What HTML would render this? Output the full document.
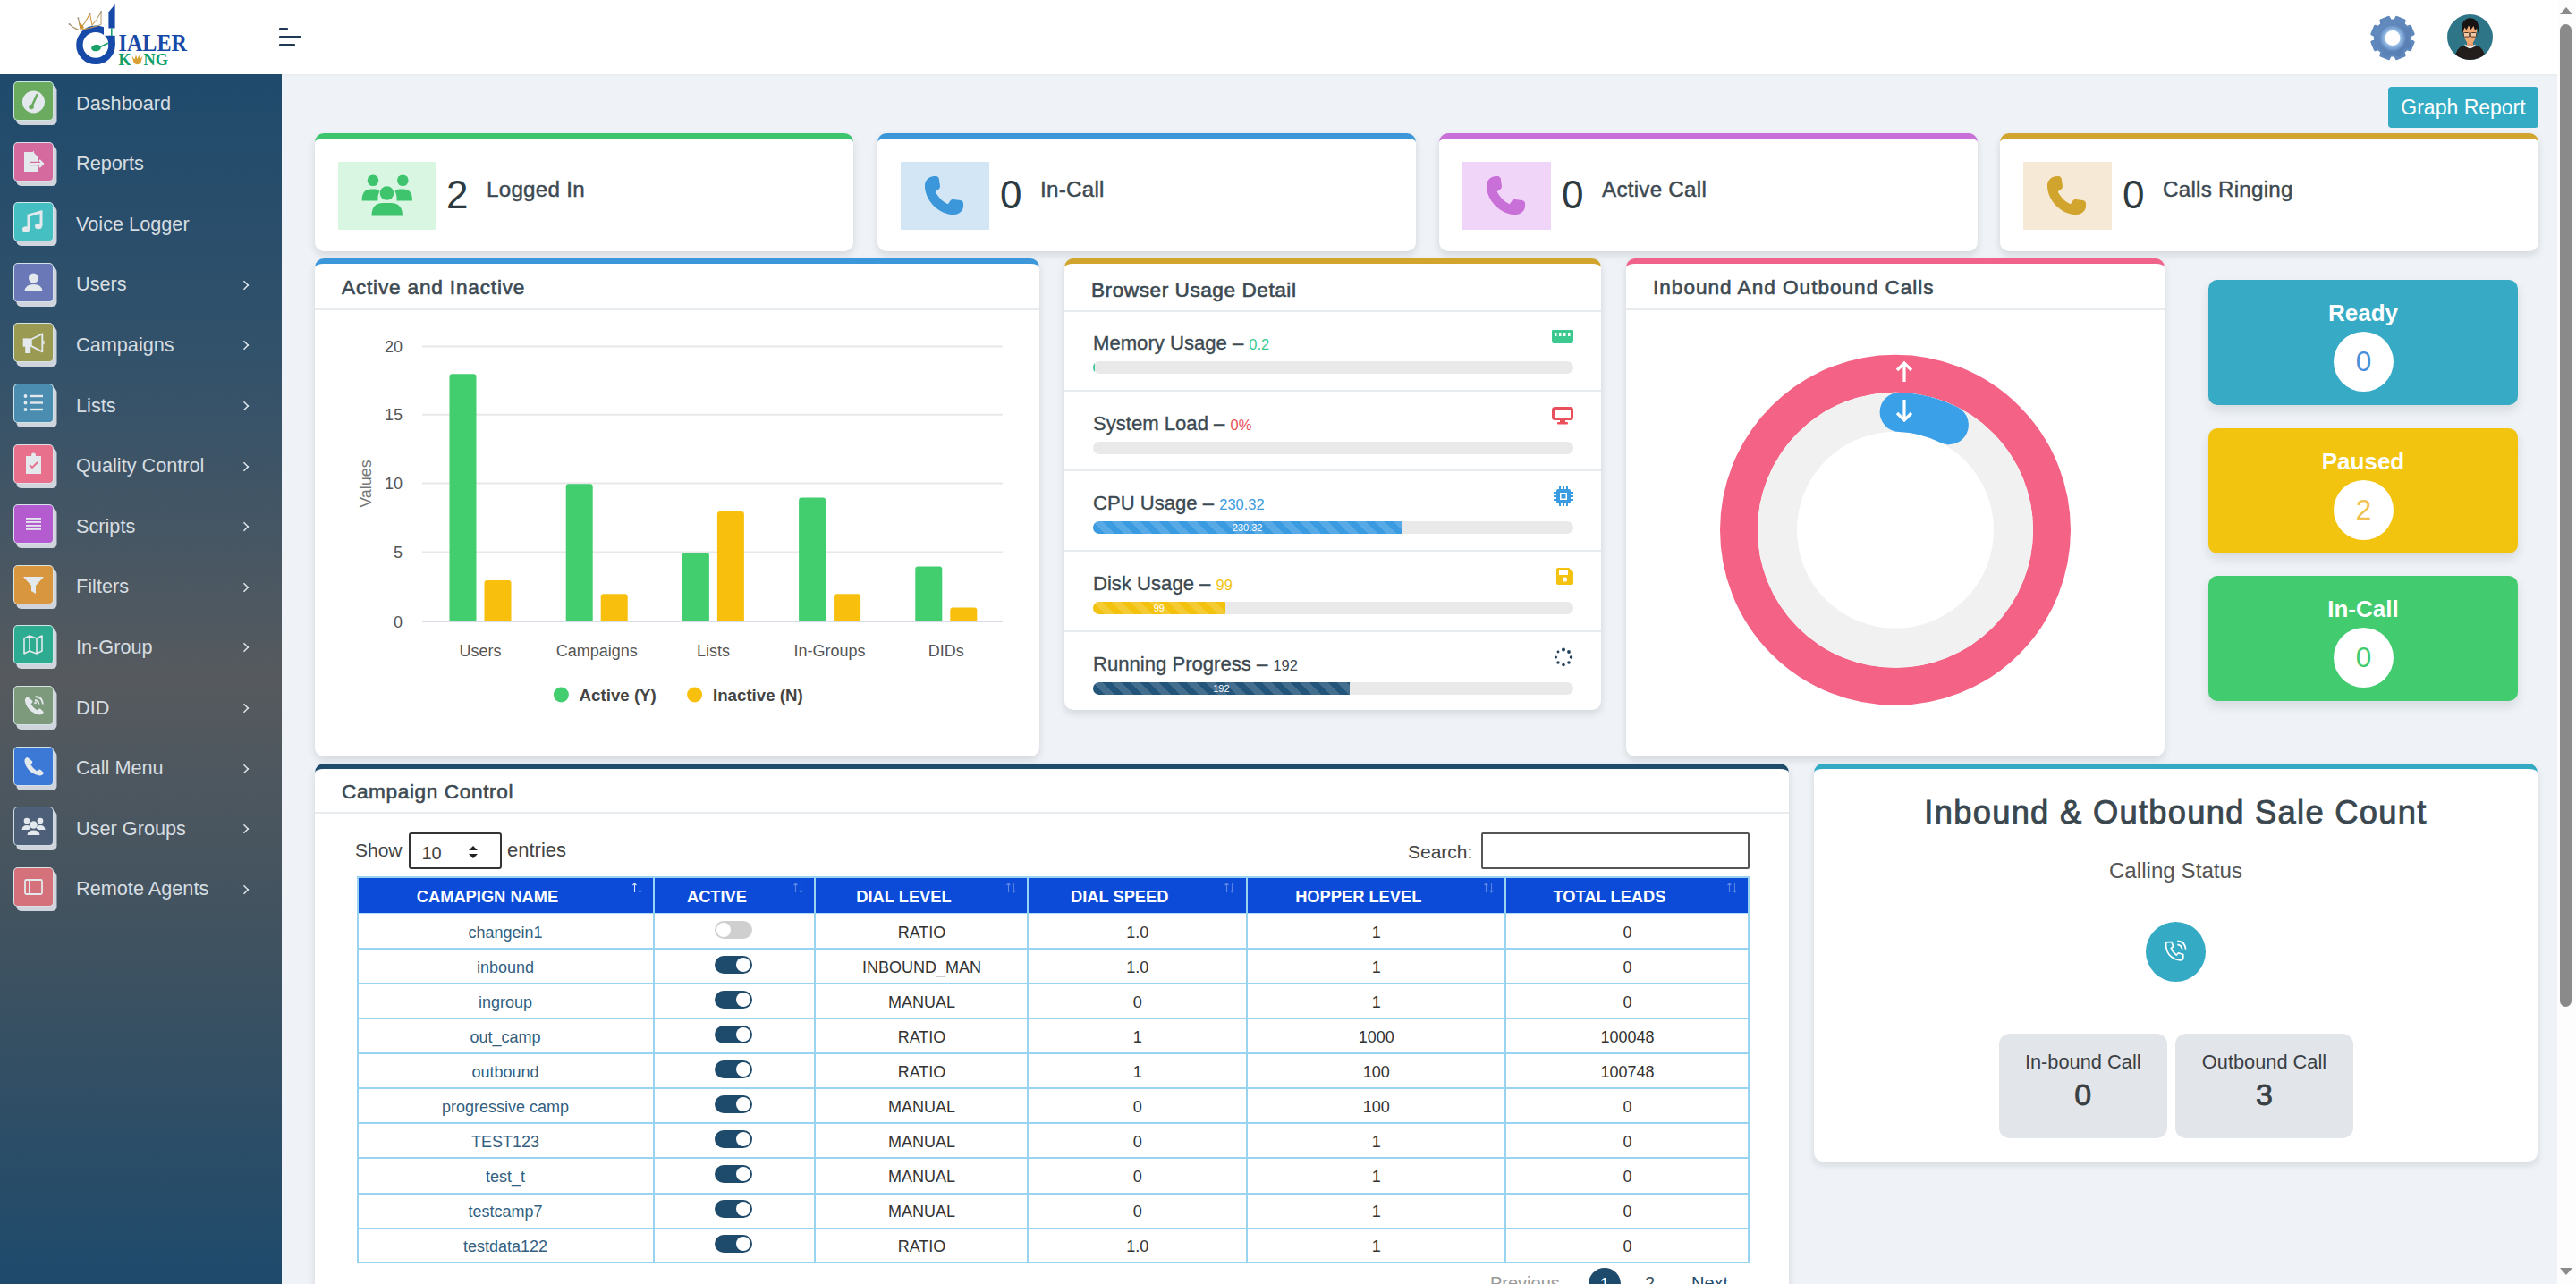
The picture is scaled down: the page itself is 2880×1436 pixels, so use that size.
<!DOCTYPE html><html><head><meta charset="utf-8"><title>Dashboard</title><style>
*{box-sizing:border-box;margin:0;padding:0}
html,body{width:2880px;height:1436px;overflow:hidden}
body{background:#eff3f7;font-family:"Liberation Sans",sans-serif;position:relative;color:#333}
.abs{position:absolute}
#hdr{left:0;top:0;width:2859px;height:83px;background:#fff;box-shadow:0 1px 3px rgba(0,0,0,.04)}
#sb{left:0;top:83px;width:315px;height:1353px;background:linear-gradient(to bottom,#1f4a6c 0%,#34526a 25%,#565a5e 50%,#3f5260 72%,#1e4a6c 100%)}
#scroll{left:2859px;top:0;width:21px;height:1436px;background:#fdfdfd}
.mi{position:absolute;left:0;width:315px;height:60px}
.mi .ib{position:absolute;left:15px;top:0;width:45px;height:44px;border-radius:5px;border:1.5px solid rgba(222,236,240,.9);box-shadow:3.5px 5px 0 #d0d4dc}
.mi .tx{position:absolute;left:85px;top:12.5px;font-size:21.7px;color:#d6dde1;white-space:nowrap;line-height:24px}
.mi .chev{position:absolute;left:268px;top:20px;width:10px;height:10px;border-right:2px solid #dfe6ea;border-top:2px solid #dfe6ea;transform:rotate(45deg) scale(.75)}
.card{position:absolute;background:#fff;border-radius:10px;border-top:6px solid #3ec46d;box-shadow:0 4px 9px rgba(20,20,30,.12)}
.stat .icb{position:absolute;top:26px;height:76px}
.stat .num{position:absolute;top:32.5px;font-size:44px;color:#2d3a3f;line-height:60px}
.stat .lbl{position:absolute;top:42px;font-size:24.2px;color:#3d4a52;-webkit-text-stroke:0.45px #3d4a52;letter-spacing:0.25px;line-height:30px;white-space:nowrap}
.ch{position:absolute;left:0;right:0;top:0;height:52px;border-bottom:2px solid #e9ecef}
.ch span{position:absolute;left:30px;top:14px;font-size:22.6px;color:#3d4a52;-webkit-text-stroke:0.6px #3d4a52;letter-spacing:0.62px;white-space:nowrap;line-height:26px}
</style></head><body>
<div id="hdr" class="abs">
<svg class="abs" style="left:70px;top:0px" width="150" height="80" viewBox="70 0 150 80">
<defs><linearGradient id="crg" x1="0" y1="0" x2="1" y2="0"><stop offset="0" stop-color="#9a8a70"/><stop offset="0.5" stop-color="#d49a3c"/><stop offset="1" stop-color="#b8a27a"/></linearGradient></defs>
<circle cx="107" cy="50.3" r="18.1" fill="none" stroke="#1649a8" stroke-width="7.4"/>
<rect x="116" y="20" width="20" height="19.8" fill="#fff"/>
<rect x="121.4" y="39.8" width="7.3" height="12" fill="#1649a8"/>
<path d="M121.4 13.4 L128.6 4.7 L128.6 31.5 L121.4 31.5 Z" fill="#1649a8"/>
<rect x="124" y="31.5" width="1.6" height="8.5" fill="#19a068"/>
<ellipse cx="107.5" cy="53.6" rx="5.4" ry="3.7" fill="#19a068" transform="rotate(-8 107.5 53.6)"/>
<path d="M111.5 52.8 L120.3 48.4" stroke="#19a068" stroke-width="1.7" stroke-linecap="round"/>
<path d="M77.5 26.8 Q82 31.5 88.5 33.5 Q100 32 113 27.5" fill="none" stroke="url(#crg)" stroke-width="1.1"/>
<path d="M87.4 20.2 L90 32 L95 25 L100.5 15.6 L103 28 L108 22 L113 13.4 L113 27.5" fill="none" stroke="url(#crg)" stroke-width="1.1"/>
<path d="M88 25 Q92 27 94 31 L90 33 Z" fill="#d4902c"/>
<circle cx="77.5" cy="26.8" r="0.9" fill="#9a8a70"/><circle cx="87.4" cy="20.2" r="0.9" fill="#9a8a70"/><circle cx="100.5" cy="15.6" r="0.9" fill="#9a8a70"/><circle cx="113" cy="13.4" r="0.9" fill="#9a8a70"/>
<text x="132.6" y="57.3" font-family="Liberation Serif" font-weight="bold" font-size="26.7" fill="#1649a8" textLength="76.3" lengthAdjust="spacingAndGlyphs">IALER</text>
<text x="132.6" y="72.9" font-family="Liberation Serif" font-weight="bold" font-size="18.9" fill="#13a06a" textLength="14" lengthAdjust="spacingAndGlyphs">K</text>
<path d="M147.5 62.5 L150.5 66.5 L152 61.5 L153.5 66 L155.5 61.5 L156.5 66.5 L159.5 62.5 L157.5 70 Q153.5 74.5 149.5 70 Z" fill="#d9a033"/>
<text x="160.5" y="72.9" font-family="Liberation Serif" font-weight="bold" font-size="18.9" fill="#13a06a" textLength="27.5" lengthAdjust="spacingAndGlyphs">NG</text>
</svg>
<div class="abs" style="left:312px;top:31px;width:10px;height:3px;background:#1d3a52;border-radius:1px"></div>
<div class="abs" style="left:312px;top:40px;width:25px;height:3px;background:#1d3a52;border-radius:1px"></div>
<div class="abs" style="left:312px;top:49px;width:18px;height:3px;background:#1d3a52;border-radius:1px"></div>
<svg class="abs" style="left:2645px;top:12px" width="62" height="62" viewBox="2645 12 62 62">
<defs><linearGradient id="gg" x1="0" y1="0" x2="1" y2="1"><stop offset="0" stop-color="#6890c4"/><stop offset="1" stop-color="#5479ae"/></linearGradient>
<radialGradient id="gr"><stop offset="0.55" stop-color="#9fc5ec"/><stop offset="1" stop-color="#5d85bb"/></radialGradient></defs>
<path d="M2677.6 22.9 L2679.5 19.3 L2688.2 22.9 L2687.1 26.8 L2690.7 30.4 L2694.6 29.3 L2698.2 38.0 L2694.6 39.9 L2694.6 45.1 L2698.2 47.0 L2694.6 55.7 L2690.7 54.6 L2687.1 58.2 L2688.2 62.1 L2679.5 65.7 L2677.6 62.1 L2672.4 62.1 L2670.5 65.7 L2661.8 62.1 L2662.9 58.2 L2659.3 54.6 L2655.4 55.7 L2651.8 47.0 L2655.4 45.1 L2655.4 39.9 L2651.8 38.0 L2655.4 29.3 L2659.3 30.4 L2662.9 26.8 L2661.8 22.9 L2670.5 19.3 L2672.4 22.9Z" fill="url(#gg)" stroke="#5f88bc" stroke-width="3" stroke-linejoin="round"/>
<circle cx="2675" cy="42.5" r="15" fill="url(#gr)"/>
<circle cx="2675" cy="42.5" r="8.5" fill="#fff"/>
</svg>
<svg class="abs" style="left:2736px;top:16px" width="51" height="51" viewBox="0 0 51 51">
<defs><clipPath id="ac"><circle cx="25.5" cy="25.5" r="25.5"/></clipPath></defs>
<g clip-path="url(#ac)">
<rect width="51" height="51" fill="#2e7588"/>
<path d="M8 52 Q9 38 17.5 35 L33.5 35 Q42 38 43 52Z" fill="#231e1c"/>
<rect x="22" y="27" width="7" height="8" fill="#e29a6a"/>
<path d="M19.5 33.5 L25.5 36.5 L31.5 33.5 L31 36 L25.5 38.5 L20 36Z" fill="#f2f2f2"/>
<path d="M17.8 12 Q17.5 31 25.5 33.5 Q33.5 31 33.2 12 Z" fill="#efa974"/>
<path d="M16.5 22 Q14.5 9 21 5.5 Q25.5 3 30.5 5.5 Q37 9 34.5 22 L33.5 15.5 L31 18 L29.5 13 L26.5 17 L24 12.5 L21.5 17.5 L19.5 14.5 L18 19Z" fill="#171313"/>
<rect x="18.3" y="20.5" width="6.4" height="4.6" rx="1.2" fill="rgba(255,255,255,.35)" stroke="#3b2a22" stroke-width="0.9"/>
<rect x="26.3" y="20.5" width="6.4" height="4.6" rx="1.2" fill="rgba(255,255,255,.35)" stroke="#3b2a22" stroke-width="0.9"/>
</g></svg>
</div>
<div id="sb" class="abs"></div>
<div class="mi" style="top:91.0px"><div class="ib" style="background:#6aab5f"><svg width="45" height="44" viewBox="0 0 45 44" style="position:absolute;left:-1px;top:-1px"><circle cx="22.5" cy="23" r="12.5" fill="#e3e9ec"/><path d="M20 29 L26.5 15" stroke="#6aab5f" stroke-width="2.6" stroke-linecap="round"/><circle cx="20" cy="28.5" r="2.8" fill="#6aab5f"/></svg></div><div class="tx">Dashboard</div></div>
<div class="mi" style="top:158.6px"><div class="ib" style="background:#d56a9e"><svg width="45" height="44" viewBox="0 0 45 44" style="position:absolute;left:-1px;top:-1px"><path d="M12 11 L22 11 L27 16 L27 33 L12 33 Z" fill="#e3e9ec"/><path d="M22.5 10 L22.5 15.5 L28 15.5" fill="none" stroke="#e3e9ec" stroke-width="1.2"/><path d="M20 24 L33 24 M29 20 L33 24 L29 28" stroke="#e3e9ec" stroke-width="2" fill="none"/><path d="M19 21.8 L27 21.8 L27 26.2 L19 26.2Z" fill="#d56a9e"/><path d="M19 24 L33 24 M29.5 20.5 L33 24 L29.5 27.5" stroke="#e3e9ec" stroke-width="1.8" fill="none"/></svg></div><div class="tx">Reports</div></div>
<div class="mi" style="top:226.2px"><div class="ib" style="background:#46bfc3"><svg width="45" height="44" viewBox="0 0 45 44" style="position:absolute;left:-1px;top:-1px"><path d="M17 30 L17 15 L31 11 L31 27" fill="none" stroke="#e3e9ec" stroke-width="3"/><ellipse cx="14" cy="30.5" rx="4" ry="3.2" fill="#e3e9ec"/><ellipse cx="28" cy="27" rx="4" ry="3.2" fill="#e3e9ec"/></svg></div><div class="tx">Voice Logger</div></div>
<div class="mi" style="top:293.8px"><div class="ib" style="background:#6a78b8"><svg width="45" height="44" viewBox="0 0 45 44" style="position:absolute;left:-1px;top:-1px"><circle cx="22.5" cy="17" r="5.5" fill="#e3e9ec"/><path d="M12.5 32 Q13 24 22.5 24 Q32 24 32.5 32 Z" fill="#e3e9ec"/></svg></div><div class="tx">Users</div><div class="chev"></div></div>
<div class="mi" style="top:361.4px"><div class="ib" style="background:#9a9a52"><svg width="45" height="44" viewBox="0 0 45 44" style="position:absolute;left:-1px;top:-1px"><rect x="10.7" y="17.4" width="8.6" height="9.3" fill="#e3e9ec"/><rect x="13.2" y="26" width="6" height="8" fill="#e3e9ec"/><path d="M19.8 18.5 L32.3 12.3 L32.3 32.3 L19.8 25.8 Z" fill="none" stroke="#e3e9ec" stroke-width="1.9" stroke-linejoin="round"/><path d="M33.5 20 Q35 22 33.5 24" fill="none" stroke="#e3e9ec" stroke-width="1.5"/></svg></div><div class="tx">Campaigns</div><div class="chev"></div></div>
<div class="mi" style="top:429.0px"><div class="ib" style="background:#4a8db0"><svg width="45" height="44" viewBox="0 0 45 44" style="position:absolute;left:-1px;top:-1px"><circle cx="13.5" cy="14" r="1.9" fill="#e3e9ec"/><circle cx="13.5" cy="21.5" r="1.9" fill="#e3e9ec"/><circle cx="13.5" cy="29" r="1.9" fill="#e3e9ec"/><rect x="18" y="12.8" width="15" height="2.4" fill="#e3e9ec"/><rect x="18" y="20.3" width="15" height="2.4" fill="#e3e9ec"/><rect x="18" y="27.8" width="15" height="2.4" fill="#e3e9ec"/></svg></div><div class="tx">Lists</div><div class="chev"></div></div>
<div class="mi" style="top:496.6px"><div class="ib" style="background:#e8708d"><svg width="45" height="44" viewBox="0 0 45 44" style="position:absolute;left:-1px;top:-1px"><path d="M14 13 L31 13 L31 33 L14 33 Z" fill="#e3e9ec"/><circle cx="22.5" cy="12" r="2.5" fill="#e3e9ec"/><path d="M18 23 L21 26 L27 20" stroke="#e8708d" stroke-width="1.8" fill="none"/></svg></div><div class="tx">Quality Control</div><div class="chev"></div></div>
<div class="mi" style="top:564.2px"><div class="ib" style="background:#b55bd0"><svg width="45" height="44" viewBox="0 0 45 44" style="position:absolute;left:-1px;top:-1px"><rect x="14" y="15" width="17" height="1.8" fill="#e3e9ec"/><rect x="14" y="19" width="17" height="1.8" fill="#e3e9ec"/><rect x="14" y="23" width="17" height="1.8" fill="#e3e9ec"/><rect x="14" y="27" width="17" height="1.8" fill="#e3e9ec"/></svg></div><div class="tx">Scripts</div><div class="chev"></div></div>
<div class="mi" style="top:631.8px"><div class="ib" style="background:#d8963f"><svg width="45" height="44" viewBox="0 0 45 44" style="position:absolute;left:-1px;top:-1px"><path d="M11 13 L34 13 L25 23 L25 32 L20 29 L20 23 Z" fill="#e3e9ec"/></svg></div><div class="tx">Filters</div><div class="chev"></div></div>
<div class="mi" style="top:699.4px"><div class="ib" style="background:#2eac92"><svg width="45" height="44" viewBox="0 0 45 44" style="position:absolute;left:-1px;top:-1px"><path d="M12 15 L18 12 L26 15 L32 12 L32 29 L26 32 L18 29 L12 32 Z M18 12 L18 29 M26 15 L26 32" fill="none" stroke="#e3e9ec" stroke-width="1.6" stroke-linejoin="round"/></svg></div><div class="tx">In-Group</div><div class="chev"></div></div>
<div class="mi" style="top:767.0px"><div class="ib" style="background:#7e9a7c"><svg width="45" height="44" viewBox="0 0 45 44" style="position:absolute;left:-1px;top:-1px"><g transform="translate(10.5 10) scale(0.7)"><path d="M8 3.5 Q6.5 3.5 5 5 Q3 7 3.5 10 Q5 19 13 26 Q20 31.5 27 32 Q30 32.2 32 30 Q33.5 28.5 33 27 L28 22.5 Q26.8 21.6 25.5 22.5 L22.5 24.8 Q17 21.5 13 15 L15.3 12 Q16.2 10.8 15.3 9.5 Z" fill="#e3e9ec"/></g><path d="M24 16 Q28 16.5 28.5 20.5 M24.5 12 Q32.5 12.5 33 20.5" stroke="#e3e9ec" stroke-width="1.8" fill="none"/><circle cx="24.5" cy="19" r="1.3" fill="#e3e9ec"/></svg></div><div class="tx">DID</div><div class="chev"></div></div>
<div class="mi" style="top:834.6px"><div class="ib" style="background:#3c79d6"><svg width="45" height="44" viewBox="0 0 45 44" style="position:absolute;left:-1px;top:-1px"><g transform="translate(10 9.5) scale(0.72)"><path d="M8 3.5 Q6.5 3.5 5 5 Q3 7 3.5 10 Q5 19 13 26 Q20 31.5 27 32 Q30 32.2 32 30 Q33.5 28.5 33 27 L28 22.5 Q26.8 21.6 25.5 22.5 L22.5 24.8 Q17 21.5 13 15 L15.3 12 Q16.2 10.8 15.3 9.5 Z" fill="#e3e9ec"/></g></svg></div><div class="tx">Call Menu</div><div class="chev"></div></div>
<div class="mi" style="top:902.2px"><div class="ib" style="background:#4e5f79"><svg width="45" height="44" viewBox="0 0 45 44" style="position:absolute;left:-1px;top:-1px"><circle cx="15" cy="16" r="3.3" fill="#e3e9ec"/><circle cx="30" cy="16" r="3.3" fill="#e3e9ec"/><path d="M9.5 26 Q10 21 15 21 Q19 21 19.5 24 L17 26Z M35.5 26 Q35 21 30 21 Q26 21 25.5 24 L28 26Z" fill="#e3e9ec"/><circle cx="22.5" cy="20.5" r="4.2" fill="#e3e9ec"/><path d="M15.5 32 Q16 26.5 22.5 26.5 Q29 26.5 29.5 32 Z" fill="#e3e9ec"/></svg></div><div class="tx">User Groups</div><div class="chev"></div></div>
<div class="mi" style="top:969.8px"><div class="ib" style="background:#d4717b"><svg width="45" height="44" viewBox="0 0 45 44" style="position:absolute;left:-1px;top:-1px"><rect x="13" y="14" width="19" height="16" rx="1.5" fill="none" stroke="#e3e9ec" stroke-width="1.8"/><rect x="17" y="14" width="1.8" height="16" fill="#e3e9ec"/></svg></div><div class="tx">Remote Agents</div><div class="chev"></div></div>
<div id="scroll" class="abs"></div>
<div class="abs" style="left:2862px;top:8px;width:0;height:0;border-left:7px solid transparent;border-right:7px solid transparent;border-bottom:8px solid #8a8a8a"></div>
<div class="abs" style="left:2862px;top:27px;width:13px;height:1099px;background:#8a8a8a;border-radius:7px"></div>
<div class="abs" style="left:2862px;top:1418px;width:0;height:0;border-left:7px solid transparent;border-right:7px solid transparent;border-top:8px solid #8a8a8a"></div>
<div class="abs" style="left:2670px;top:97px;width:168px;height:46px;background:#33abc4;border-radius:4px;color:#fff;font-size:23px;line-height:46px;text-align:center">Graph Report</div>
<div class="card stat" style="left:352px;top:149px;width:602px;height:132px;border-top-color:#3ec46d">
<div class="icb" style="left:26px;width:109px;background:#d8f6e2"></div>
<svg class="abs" style="left:52px;top:40px" width="58" height="48" viewBox="404 195 58 48" fill="#3ec46d"><circle cx="417" cy="201.8" r="6.3"/><circle cx="450.3" cy="201.8" r="6.3"/><path d="M404.5 224.5 Q404.5 211.5 415 211.5 L420 211.5 Q423 211.5 424.5 214 Q422 218 422.5 224.5Z"/><path d="M461 224.5 Q461 211.5 451 211.5 L446 211.5 Q443 211.5 441.5 214 Q444 218 443.5 224.5Z"/><circle cx="432.5" cy="216" r="7.8"/><path d="M415.5 241.5 Q415.5 227 428 227 L437 227 Q450 227 450 241.5Z"/></svg>
<div class="num" style="left:147px">2</div>
<div class="lbl" style="left:192px">Logged In</div>
</div>
<div class="card stat" style="left:981px;top:149px;width:602px;height:132px;border-top-color:#3b96da">
<div class="icb" style="left:26px;width:99px;background:#d2e6f5"></div>
<svg class="abs" style="left:51px;top:40px" width="47" height="47" viewBox="0 0 36 36" fill="#3b96da"><path d="M9.5 1.5 C6 1.5 1.5 4.5 1.5 9.5 C1.5 22.5 13.5 34.5 26.5 34.5 C31 34.5 34.5 31 34.5 27 L34.5 25 C34.5 23.5 33.5 22.5 32 22.3 L26 21.5 C24.8 21.3 23.8 21.8 23.2 22.8 L21.3 25.5 C16.5 23.3 12.8 19.5 10.5 14.8 L13.2 12.8 C14.2 12.2 14.7 11.2 14.5 10 L13.7 4 C13.5 2.5 12.5 1.5 11 1.5 Z"/></svg>
<div class="num" style="left:137px">0</div>
<div class="lbl" style="left:182px">In-Call</div>
</div>
<div class="card stat" style="left:1609px;top:149px;width:602px;height:132px;border-top-color:#c86fd8">
<div class="icb" style="left:26px;width:99px;background:#f1d5f8"></div>
<svg class="abs" style="left:51px;top:40px" width="47" height="47" viewBox="0 0 36 36" fill="#c86fd8"><path d="M9.5 1.5 C6 1.5 1.5 4.5 1.5 9.5 C1.5 22.5 13.5 34.5 26.5 34.5 C31 34.5 34.5 31 34.5 27 L34.5 25 C34.5 23.5 33.5 22.5 32 22.3 L26 21.5 C24.8 21.3 23.8 21.8 23.2 22.8 L21.3 25.5 C16.5 23.3 12.8 19.5 10.5 14.8 L13.2 12.8 C14.2 12.2 14.7 11.2 14.5 10 L13.7 4 C13.5 2.5 12.5 1.5 11 1.5 Z"/></svg>
<div class="num" style="left:137px">0</div>
<div class="lbl" style="left:182px">Active Call</div>
</div>
<div class="card stat" style="left:2236px;top:149px;width:602px;height:132px;border-top-color:#d1a42e">
<div class="icb" style="left:26px;width:99px;background:#f6ead7"></div>
<svg class="abs" style="left:51px;top:40px" width="47" height="47" viewBox="0 0 36 36" fill="#d1a42e"><path d="M9.5 1.5 C6 1.5 1.5 4.5 1.5 9.5 C1.5 22.5 13.5 34.5 26.5 34.5 C31 34.5 34.5 31 34.5 27 L34.5 25 C34.5 23.5 33.5 22.5 32 22.3 L26 21.5 C24.8 21.3 23.8 21.8 23.2 22.8 L21.3 25.5 C16.5 23.3 12.8 19.5 10.5 14.8 L13.2 12.8 C14.2 12.2 14.7 11.2 14.5 10 L13.7 4 C13.5 2.5 12.5 1.5 11 1.5 Z"/></svg>
<div class="num" style="left:137px">0</div>
<div class="lbl" style="left:182px">Calls Ringing</div>
</div>
<div class="card" style="left:352px;top:289px;width:810px;height:557px;border-top-color:#3b96da"><div class="ch"><span style="letter-spacing:0.82px">Active and Inactive</span></div></div>
<div class="card" style="left:1190px;top:289px;width:600px;height:505px;border-top-color:#d1a42e"><div class="ch" style="height:54px"><span style="top:17px;letter-spacing:0.55px">Browser Usage Detail</span></div></div>
<div class="card" style="left:1818px;top:289px;width:602px;height:557px;border-top-color:#f0638a"><div class="ch"><span style="letter-spacing:0.99px">Inbound And Outbound Calls</span></div></div>
<div class="abs" style="left:2469px;top:313px;width:346px;height:140px;border-radius:10px;background:#37aac5;box-shadow:0 6px 12px rgba(30,40,60,.12)">
<div class="abs" style="left:0;right:0;top:22px;text-align:center;color:#fff;font-weight:bold;font-size:26px;line-height:30px">Ready</div>
<div class="abs" style="left:140px;top:58px;width:67px;height:67px;border-radius:50%;background:#fff;color:#4a90d9;font-size:31.5px;line-height:67px;text-align:center">0</div>
</div>
<div class="abs" style="left:2469px;top:478.6px;width:346px;height:140px;border-radius:10px;background:#f2c40f;box-shadow:0 6px 12px rgba(30,40,60,.12)">
<div class="abs" style="left:0;right:0;top:22px;text-align:center;color:#fff;font-weight:bold;font-size:26px;line-height:30px">Paused</div>
<div class="abs" style="left:140px;top:58px;width:67px;height:67px;border-radius:50%;background:#fff;color:#f0c050;font-size:31.5px;line-height:67px;text-align:center">2</div>
</div>
<div class="abs" style="left:2469px;top:643.5px;width:346px;height:140px;border-radius:10px;background:#42cb6f;box-shadow:0 6px 12px rgba(30,40,60,.12)">
<div class="abs" style="left:0;right:0;top:22px;text-align:center;color:#fff;font-weight:bold;font-size:26px;line-height:30px">In-Call</div>
<div class="abs" style="left:140px;top:58px;width:67px;height:67px;border-radius:50%;background:#fff;color:#42cb6f;font-size:31.5px;line-height:67px;text-align:center">0</div>
</div>
<div class="card" style="left:352px;top:854px;width:1648px;height:700px;border-top-color:#1e4a6b"><div class="ch" style="height:50px"><span style="top:12.5px;letter-spacing:0.62px">Campaign Control</span></div></div>
<div class="card" style="left:2028px;top:854px;width:809px;height:445px;border-top-color:#33a9c3"></div>
<svg class="abs" style="left:352px;top:295px" width="810" height="551" viewBox="352 295 810 551"><line x1="472" x2="1121" y1="387.5" y2="387.5" stroke="#e8e8e8" stroke-width="2"/><text x="450" y="394.0" text-anchor="end" font-size="18" fill="#555" font-family="Liberation Sans">20</text><line x1="472" x2="1121" y1="463.8" y2="463.8" stroke="#e8e8e8" stroke-width="2"/><text x="450" y="470.3" text-anchor="end" font-size="18" fill="#555" font-family="Liberation Sans">15</text><line x1="472" x2="1121" y1="540.5" y2="540.5" stroke="#e8e8e8" stroke-width="2"/><text x="450" y="547.0" text-anchor="end" font-size="18" fill="#555" font-family="Liberation Sans">10</text><line x1="472" x2="1121" y1="617.5" y2="617.5" stroke="#e8e8e8" stroke-width="2"/><text x="450" y="624.0" text-anchor="end" font-size="18" fill="#555" font-family="Liberation Sans">5</text><line x1="472" x2="1121" y1="695.0" y2="695.0" stroke="#d8dbe8" stroke-width="2"/><text x="450" y="701.5" text-anchor="end" font-size="18" fill="#555" font-family="Liberation Sans">0</text><text x="0" y="0" transform="translate(415 541) rotate(-90)" text-anchor="middle" font-size="18" fill="#777" font-family="Liberation Sans">Values</text><path d="M502.5 695 L502.5 421.2 Q502.5 418.2 505.5 418.2 L529.5 418.2 Q532.5 418.2 532.5 421.2 L532.5 695Z" fill="#42cd6e"/><path d="M541.5 695 L541.5 651.9 Q541.5 648.9 544.5 648.9 L568.5 648.9 Q571.5 648.9 571.5 651.9 L571.5 695Z" fill="#f8c00d"/><text x="537.0" y="734" text-anchor="middle" font-size="18" fill="#555" font-family="Liberation Sans">Users</text><path d="M632.7 695 L632.7 544.2 Q632.7 541.2 635.7 541.2 L659.7 541.2 Q662.7 541.2 662.7 544.2 L662.7 695Z" fill="#42cd6e"/><path d="M671.7 695 L671.7 667.2 Q671.7 664.2 674.7 664.2 L698.7 664.2 Q701.7 664.2 701.7 667.2 L701.7 695Z" fill="#f8c00d"/><text x="667.2" y="734" text-anchor="middle" font-size="18" fill="#555" font-family="Liberation Sans">Campaigns</text><path d="M762.9 695 L762.9 621.1 Q762.9 618.1 765.9 618.1 L789.9 618.1 Q792.9 618.1 792.9 621.1 L792.9 695Z" fill="#42cd6e"/><path d="M801.9 695 L801.9 575.0 Q801.9 572.0 804.9 572.0 L828.9 572.0 Q831.9 572.0 831.9 575.0 L831.9 695Z" fill="#f8c00d"/><text x="797.4" y="734" text-anchor="middle" font-size="18" fill="#555" font-family="Liberation Sans">Lists</text><path d="M893.1 695 L893.1 559.6 Q893.1 556.6 896.1 556.6 L920.1 556.6 Q923.1 556.6 923.1 559.6 L923.1 695Z" fill="#42cd6e"/><path d="M932.1 695 L932.1 667.2 Q932.1 664.2 935.1 664.2 L959.1 664.2 Q962.1 664.2 962.1 667.2 L962.1 695Z" fill="#f8c00d"/><text x="927.6" y="734" text-anchor="middle" font-size="18" fill="#555" font-family="Liberation Sans">In-Groups</text><path d="M1023.3 695 L1023.3 636.5 Q1023.3 633.5 1026.3 633.5 L1050.3 633.5 Q1053.3 633.5 1053.3 636.5 L1053.3 695Z" fill="#42cd6e"/><path d="M1062.3 695 L1062.3 682.6 Q1062.3 679.6 1065.3 679.6 L1089.3 679.6 Q1092.3 679.6 1092.3 682.6 L1092.3 695Z" fill="#f8c00d"/><text x="1057.8" y="734" text-anchor="middle" font-size="18" fill="#555" font-family="Liberation Sans">DIDs</text><circle cx="627.4" cy="777" r="8.5" fill="#42cd6e"/><text x="647.6" y="783.5" font-size="18.7" font-weight="bold" fill="#444" font-family="Liberation Sans">Active (Y)</text><circle cx="776.6" cy="777" r="8.5" fill="#f8c00d"/><text x="797" y="783.5" font-size="18.7" font-weight="bold" fill="#444" font-family="Liberation Sans">Inactive (N)</text></svg>
<div class="abs" style="left:1222px;top:371px;white-space:nowrap;line-height:26px"><span style="font-size:22.1px;color:#3d4a52;-webkit-text-stroke:0.35px #3d4a52">Memory Usage &ndash; </span><span style="font-size:16.5px;color:#3cc98f">0.2</span></div>
<div class="abs" style="left:1222px;top:404px;width:537px;height:14px;border-radius:7px;background:#e9e9e9;overflow:hidden"><div style="width:2.1px;height:14px;background-color:#3cc98f;background-image:linear-gradient(45deg,rgba(255,255,255,.15) 25%,transparent 25%,transparent 50%,rgba(255,255,255,.15) 50%,rgba(255,255,255,.15) 75%,transparent 75%,transparent);background-size:21px 21px;color:#fff;font-size:11px;line-height:14px;text-align:center"></div></div>
<div class="abs" style="left:1190px;top:436px;width:600px;height:2px;background:#e9ecef"></div>
<div class="abs" style="left:1222px;top:461px;white-space:nowrap;line-height:26px"><span style="font-size:22.1px;color:#3d4a52;-webkit-text-stroke:0.35px #3d4a52">System Load &ndash; </span><span style="font-size:16.5px;color:#e8505b">0%</span></div>
<div class="abs" style="left:1222px;top:494px;width:537px;height:14px;border-radius:7px;background:#e9e9e9;overflow:hidden"><div style="width:0.0px;height:14px;background-color:#e8505b;background-image:linear-gradient(45deg,rgba(255,255,255,.15) 25%,transparent 25%,transparent 50%,rgba(255,255,255,.15) 50%,rgba(255,255,255,.15) 75%,transparent 75%,transparent);background-size:21px 21px;color:#fff;font-size:11px;line-height:14px;text-align:center"></div></div>
<div class="abs" style="left:1190px;top:525px;width:600px;height:2px;background:#e9ecef"></div>
<div class="abs" style="left:1222px;top:550px;white-space:nowrap;line-height:26px"><span style="font-size:22.1px;color:#3d4a52;-webkit-text-stroke:0.35px #3d4a52">CPU Usage &ndash; </span><span style="font-size:16.5px;color:#3a9be0">230.32</span></div>
<div class="abs" style="left:1222px;top:583px;width:537px;height:14px;border-radius:7px;background:#e9e9e9;overflow:hidden"><div style="width:345.3px;height:14px;background-color:#3a9be0;background-image:linear-gradient(45deg,rgba(255,255,255,.15) 25%,transparent 25%,transparent 50%,rgba(255,255,255,.15) 50%,rgba(255,255,255,.15) 75%,transparent 75%,transparent);background-size:21px 21px;color:#fff;font-size:11px;line-height:14px;text-align:center">230.32</div></div>
<div class="abs" style="left:1190px;top:615px;width:600px;height:2px;background:#e9ecef"></div>
<div class="abs" style="left:1222px;top:640px;white-space:nowrap;line-height:26px"><span style="font-size:22.1px;color:#3d4a52;-webkit-text-stroke:0.35px #3d4a52">Disk Usage &ndash; </span><span style="font-size:16.5px;color:#f0c419">99</span></div>
<div class="abs" style="left:1222px;top:673px;width:537px;height:14px;border-radius:7px;background:#e9e9e9;overflow:hidden"><div style="width:147.7px;height:14px;background-color:#f3c20f;background-image:linear-gradient(45deg,rgba(255,255,255,.15) 25%,transparent 25%,transparent 50%,rgba(255,255,255,.15) 50%,rgba(255,255,255,.15) 75%,transparent 75%,transparent);background-size:21px 21px;color:#fff;font-size:11px;line-height:14px;text-align:center">99</div></div>
<div class="abs" style="left:1190px;top:705px;width:600px;height:2px;background:#e9ecef"></div>
<div class="abs" style="left:1222px;top:730px;white-space:nowrap;line-height:26px"><span style="font-size:22.1px;color:#3d4a52;-webkit-text-stroke:0.35px #3d4a52">Running Progress &ndash; </span><span style="font-size:16.5px;color:#3d4a55">192</span></div>
<div class="abs" style="left:1222px;top:763px;width:537px;height:14px;border-radius:7px;background:#e9e9e9;overflow:hidden"><div style="width:286.8px;height:14px;background-color:#23557a;background-image:linear-gradient(45deg,rgba(255,255,255,.15) 25%,transparent 25%,transparent 50%,rgba(255,255,255,.15) 50%,rgba(255,255,255,.15) 75%,transparent 75%,transparent);background-size:21px 21px;color:#fff;font-size:11px;line-height:14px;text-align:center">192</div></div>
<svg class="abs" style="left:1735px;top:368px" width="24" height="17" viewBox="0 0 24 17"><rect x="0" y="1" width="24" height="13" rx="1" fill="#3cc98f"/><rect x="3" y="4" width="2.5" height="4" fill="#fff"/><rect x="8" y="4" width="2.5" height="4" fill="#fff"/><rect x="13" y="4" width="2.5" height="4" fill="#fff"/><rect x="18" y="4" width="2.5" height="4" fill="#fff"/><rect x="1" y="14" width="22" height="2" fill="#3cc98f"/></svg>
<svg class="abs" style="left:1735px;top:455px" width="24" height="20" viewBox="0 0 24 20"><rect x="1.5" y="1.5" width="21" height="12" rx="2" fill="none" stroke="#e8505b" stroke-width="3"/><rect x="9" y="14" width="6" height="3" fill="#e8505b"/><rect x="6" y="17" width="12" height="2.5" rx="1" fill="#e8505b"/></svg>
<svg class="abs" style="left:1737px;top:544px" width="22" height="22" viewBox="0 0 22 22"><rect x="3" y="3" width="16" height="16" rx="2" fill="#3a9be0"/><rect x="7" y="7" width="8" height="8" fill="#fff"/><rect x="8.5" y="8.5" width="5" height="5" fill="#3a9be0"/><g fill="#3a9be0"><rect x="6" y="0" width="2" height="3"/><rect x="10" y="0" width="2" height="3"/><rect x="14" y="0" width="2" height="3"/><rect x="6" y="19" width="2" height="3"/><rect x="10" y="19" width="2" height="3"/><rect x="14" y="19" width="2" height="3"/><rect x="0" y="6" width="3" height="2"/><rect x="0" y="10" width="3" height="2"/><rect x="0" y="14" width="3" height="2"/><rect x="19" y="6" width="3" height="2"/><rect x="19" y="10" width="3" height="2"/><rect x="19" y="14" width="3" height="2"/></g></svg>
<svg class="abs" style="left:1740px;top:635px" width="19" height="19" viewBox="0 0 19 19"><path d="M0 2 Q0 0 2 0 L14 0 L19 5 L19 17 Q19 19 17 19 L2 19 Q0 19 0 17Z" fill="#f3c20f"/><rect x="3" y="3" width="10" height="5" fill="#fff"/><circle cx="9.5" cy="13" r="2.6" fill="#fff"/></svg>
<svg class="abs" style="left:1737px;top:724px" width="22" height="22" viewBox="0 0 22 22" fill="#23415a"><circle cx="11" cy="2.5" r="2"/><circle cx="17" cy="5" r="1.9"/><circle cx="19.5" cy="11" r="1.8"/><circle cx="17" cy="17" r="1.8"/><circle cx="11" cy="19.5" r="1.8"/><circle cx="5" cy="17" r="1.7"/><circle cx="2.5" cy="11" r="1.6"/><circle cx="5" cy="5" r="1.4"/></svg>
<svg class="abs" style="left:1818px;top:347px" width="602" height="499" viewBox="1818 347 602 499"><circle cx="2119" cy="592.8" r="175" fill="none" stroke="#f46386" stroke-width="42"/><circle cx="2119" cy="592.8" r="132" fill="none" stroke="#f1f1f1" stroke-width="44"/><path d="M2123.6 460.9 A132 132 0 0 1 2178.9 475.2" fill="none" stroke="#3aa0e8" stroke-width="44" stroke-linecap="round"/><path d="M2129 427 L2129 407 M2121 414 L2129 406 L2137 414" stroke="#fff" stroke-width="3.2" fill="none"/><path d="M2129 447 L2129 469 M2121 462 L2129 470 L2137 462" stroke="#fff" stroke-width="3.2" fill="none"/></svg>
<div class="abs" style="left:397px;top:939.5px;font-size:21px;color:#444;line-height:22px">Show</div>
<div class="abs" style="left:456.5px;top:931px;width:104px;height:41px;border:2px solid #333;border-radius:3px;background:#fff"><span class="abs" style="left:13px;top:10px;font-size:20px;color:#444;line-height:22px">10</span><svg class="abs" style="left:64px;top:12px" width="12" height="16" viewBox="0 0 12 16"><path d="M1 6 L6 1 L11 6Z M1 10 L6 15 L11 10Z" fill="#222"/></svg></div>
<div class="abs" style="left:567px;top:939.5px;font-size:22px;color:#444;line-height:22px">entries</div>
<div class="abs" style="left:1574px;top:942px;font-size:21px;color:#444;line-height:22px">Search:</div>
<div class="abs" style="left:1656px;top:931px;width:300px;height:41px;border:2px solid #555;border-radius:2px;background:#fff"></div>
<div class="abs" style="left:398.5px;top:979.5px;width:1557px;height:44px;background:#0c4bd8;border:2px solid #98d4f0;border-bottom:3.5px solid #b0e0f8"></div>
<div class="abs" style="left:398.5px;top:992.5px;width:333.0px;text-align:center;padding-right:40px;color:#fff;font-weight:bold;font-size:18.3px;line-height:20px;white-space:nowrap">CAMAPIGN NAME</div>
<svg class="abs" style="left:704.5px;top:985px" width="16" height="16" viewBox="0 0 16 16"><path d="M4.5 13 L4.5 3 M2.5 5 L4.5 3 L6.5 5" stroke="rgba(255,255,255,.85)" stroke-width="1.1" fill="none"/><path d="M10.5 3 L10.5 13 M8.5 11 L10.5 13 L12.5 11" stroke="rgba(255,255,255,.3)" stroke-width="1.1" fill="none"/></svg>
<div class="abs" style="left:731.5px;top:992.5px;width:180.0px;text-align:center;padding-right:40px;color:#fff;font-weight:bold;font-size:18.3px;line-height:20px;white-space:nowrap">ACTIVE</div>
<svg class="abs" style="left:884.5px;top:985px" width="16" height="16" viewBox="0 0 16 16"><path d="M4.5 13 L4.5 3 M2.5 5 L4.5 3 L6.5 5" stroke="rgba(255,255,255,.35)" stroke-width="1.1" fill="none"/><path d="M10.5 3 L10.5 13 M8.5 11 L10.5 13 L12.5 11" stroke="rgba(255,255,255,.3)" stroke-width="1.1" fill="none"/></svg>
<div class="abs" style="left:911.5px;top:992.5px;width:238.0px;text-align:center;padding-right:40px;color:#fff;font-weight:bold;font-size:18.3px;line-height:20px;white-space:nowrap">DIAL LEVEL</div>
<svg class="abs" style="left:1122.5px;top:985px" width="16" height="16" viewBox="0 0 16 16"><path d="M4.5 13 L4.5 3 M2.5 5 L4.5 3 L6.5 5" stroke="rgba(255,255,255,.35)" stroke-width="1.1" fill="none"/><path d="M10.5 3 L10.5 13 M8.5 11 L10.5 13 L12.5 11" stroke="rgba(255,255,255,.3)" stroke-width="1.1" fill="none"/></svg>
<div class="abs" style="left:1149.5px;top:992.5px;width:244.5px;text-align:center;padding-right:40px;color:#fff;font-weight:bold;font-size:18.3px;line-height:20px;white-space:nowrap">DIAL SPEED</div>
<svg class="abs" style="left:1367.0px;top:985px" width="16" height="16" viewBox="0 0 16 16"><path d="M4.5 13 L4.5 3 M2.5 5 L4.5 3 L6.5 5" stroke="rgba(255,255,255,.35)" stroke-width="1.1" fill="none"/><path d="M10.5 3 L10.5 13 M8.5 11 L10.5 13 L12.5 11" stroke="rgba(255,255,255,.3)" stroke-width="1.1" fill="none"/></svg>
<div class="abs" style="left:1394.0px;top:992.5px;width:289.5px;text-align:center;padding-right:40px;color:#fff;font-weight:bold;font-size:18.3px;line-height:20px;white-space:nowrap">HOPPER LEVEL</div>
<svg class="abs" style="left:1656.5px;top:985px" width="16" height="16" viewBox="0 0 16 16"><path d="M4.5 13 L4.5 3 M2.5 5 L4.5 3 L6.5 5" stroke="rgba(255,255,255,.35)" stroke-width="1.1" fill="none"/><path d="M10.5 3 L10.5 13 M8.5 11 L10.5 13 L12.5 11" stroke="rgba(255,255,255,.3)" stroke-width="1.1" fill="none"/></svg>
<div class="abs" style="left:1683.5px;top:992.5px;width:272.0px;text-align:center;padding-right:40px;color:#fff;font-weight:bold;font-size:18.3px;line-height:20px;white-space:nowrap">TOTAL LEADS</div>
<svg class="abs" style="left:1928.5px;top:985px" width="16" height="16" viewBox="0 0 16 16"><path d="M4.5 13 L4.5 3 M2.5 5 L4.5 3 L6.5 5" stroke="rgba(255,255,255,.35)" stroke-width="1.1" fill="none"/><path d="M10.5 3 L10.5 13 M8.5 11 L10.5 13 L12.5 11" stroke="rgba(255,255,255,.3)" stroke-width="1.1" fill="none"/></svg>
<div class="abs" style="left:398.5px;top:1021.5px;width:1557px;height:391px;border:2px solid #98d4f0;border-top:none;background:#fff"></div>
<div class="abs" style="left:398.5px;top:1032.5px;width:333.0px;text-align:center;color:#33607f;font-size:18px;line-height:20px;white-space:nowrap">changein1</div>
<div class="abs" style="left:799px;top:1029.5px;width:42px;height:20px;border-radius:10px;background:#cfcfcf"><div class="abs" style="left:2px;top:2px;width:16px;height:16px;border-radius:50%;background:#fff"></div></div>
<div class="abs" style="left:911.5px;top:1032.5px;width:238.0px;text-align:center;color:#333;font-size:18px;line-height:20px;white-space:nowrap">RATIO</div>
<div class="abs" style="left:1149.5px;top:1032.5px;width:244.5px;text-align:center;color:#333;font-size:18px;line-height:20px;white-space:nowrap">1.0</div>
<div class="abs" style="left:1394.0px;top:1032.5px;width:289.5px;text-align:center;color:#333;font-size:18px;line-height:20px;white-space:nowrap">1</div>
<div class="abs" style="left:1683.5px;top:1032.5px;width:272.0px;text-align:center;color:#333;font-size:18px;line-height:20px;white-space:nowrap">0</div>
<div class="abs" style="left:398.5px;top:1059.8px;width:1557px;height:2px;background:#98d4f0"></div>
<div class="abs" style="left:398.5px;top:1071.6px;width:333.0px;text-align:center;color:#33607f;font-size:18px;line-height:20px;white-space:nowrap">inbound</div>
<div class="abs" style="left:799px;top:1068.6px;width:42px;height:20px;border-radius:10px;background:#1e4a6b"><div class="abs" style="left:24px;top:2px;width:16px;height:16px;border-radius:50%;background:#fff"></div></div>
<div class="abs" style="left:911.5px;top:1071.6px;width:238.0px;text-align:center;color:#333;font-size:18px;line-height:20px;white-space:nowrap">INBOUND_MAN</div>
<div class="abs" style="left:1149.5px;top:1071.6px;width:244.5px;text-align:center;color:#333;font-size:18px;line-height:20px;white-space:nowrap">1.0</div>
<div class="abs" style="left:1394.0px;top:1071.6px;width:289.5px;text-align:center;color:#333;font-size:18px;line-height:20px;white-space:nowrap">1</div>
<div class="abs" style="left:1683.5px;top:1071.6px;width:272.0px;text-align:center;color:#333;font-size:18px;line-height:20px;white-space:nowrap">0</div>
<div class="abs" style="left:398.5px;top:1098.9px;width:1557px;height:2px;background:#98d4f0"></div>
<div class="abs" style="left:398.5px;top:1110.7px;width:333.0px;text-align:center;color:#33607f;font-size:18px;line-height:20px;white-space:nowrap">ingroup</div>
<div class="abs" style="left:799px;top:1107.7px;width:42px;height:20px;border-radius:10px;background:#1e4a6b"><div class="abs" style="left:24px;top:2px;width:16px;height:16px;border-radius:50%;background:#fff"></div></div>
<div class="abs" style="left:911.5px;top:1110.7px;width:238.0px;text-align:center;color:#333;font-size:18px;line-height:20px;white-space:nowrap">MANUAL</div>
<div class="abs" style="left:1149.5px;top:1110.7px;width:244.5px;text-align:center;color:#333;font-size:18px;line-height:20px;white-space:nowrap">0</div>
<div class="abs" style="left:1394.0px;top:1110.7px;width:289.5px;text-align:center;color:#333;font-size:18px;line-height:20px;white-space:nowrap">1</div>
<div class="abs" style="left:1683.5px;top:1110.7px;width:272.0px;text-align:center;color:#333;font-size:18px;line-height:20px;white-space:nowrap">0</div>
<div class="abs" style="left:398.5px;top:1138.0px;width:1557px;height:2px;background:#98d4f0"></div>
<div class="abs" style="left:398.5px;top:1149.8px;width:333.0px;text-align:center;color:#33607f;font-size:18px;line-height:20px;white-space:nowrap">out_camp</div>
<div class="abs" style="left:799px;top:1146.8px;width:42px;height:20px;border-radius:10px;background:#1e4a6b"><div class="abs" style="left:24px;top:2px;width:16px;height:16px;border-radius:50%;background:#fff"></div></div>
<div class="abs" style="left:911.5px;top:1149.8px;width:238.0px;text-align:center;color:#333;font-size:18px;line-height:20px;white-space:nowrap">RATIO</div>
<div class="abs" style="left:1149.5px;top:1149.8px;width:244.5px;text-align:center;color:#333;font-size:18px;line-height:20px;white-space:nowrap">1</div>
<div class="abs" style="left:1394.0px;top:1149.8px;width:289.5px;text-align:center;color:#333;font-size:18px;line-height:20px;white-space:nowrap">1000</div>
<div class="abs" style="left:1683.5px;top:1149.8px;width:272.0px;text-align:center;color:#333;font-size:18px;line-height:20px;white-space:nowrap">100048</div>
<div class="abs" style="left:398.5px;top:1177.1px;width:1557px;height:2px;background:#98d4f0"></div>
<div class="abs" style="left:398.5px;top:1188.9px;width:333.0px;text-align:center;color:#33607f;font-size:18px;line-height:20px;white-space:nowrap">outbound</div>
<div class="abs" style="left:799px;top:1185.9px;width:42px;height:20px;border-radius:10px;background:#1e4a6b"><div class="abs" style="left:24px;top:2px;width:16px;height:16px;border-radius:50%;background:#fff"></div></div>
<div class="abs" style="left:911.5px;top:1188.9px;width:238.0px;text-align:center;color:#333;font-size:18px;line-height:20px;white-space:nowrap">RATIO</div>
<div class="abs" style="left:1149.5px;top:1188.9px;width:244.5px;text-align:center;color:#333;font-size:18px;line-height:20px;white-space:nowrap">1</div>
<div class="abs" style="left:1394.0px;top:1188.9px;width:289.5px;text-align:center;color:#333;font-size:18px;line-height:20px;white-space:nowrap">100</div>
<div class="abs" style="left:1683.5px;top:1188.9px;width:272.0px;text-align:center;color:#333;font-size:18px;line-height:20px;white-space:nowrap">100748</div>
<div class="abs" style="left:398.5px;top:1216.2px;width:1557px;height:2px;background:#98d4f0"></div>
<div class="abs" style="left:398.5px;top:1228.0px;width:333.0px;text-align:center;color:#33607f;font-size:18px;line-height:20px;white-space:nowrap">progressive camp</div>
<div class="abs" style="left:799px;top:1225.0px;width:42px;height:20px;border-radius:10px;background:#1e4a6b"><div class="abs" style="left:24px;top:2px;width:16px;height:16px;border-radius:50%;background:#fff"></div></div>
<div class="abs" style="left:911.5px;top:1228.0px;width:238.0px;text-align:center;color:#333;font-size:18px;line-height:20px;white-space:nowrap">MANUAL</div>
<div class="abs" style="left:1149.5px;top:1228.0px;width:244.5px;text-align:center;color:#333;font-size:18px;line-height:20px;white-space:nowrap">0</div>
<div class="abs" style="left:1394.0px;top:1228.0px;width:289.5px;text-align:center;color:#333;font-size:18px;line-height:20px;white-space:nowrap">100</div>
<div class="abs" style="left:1683.5px;top:1228.0px;width:272.0px;text-align:center;color:#333;font-size:18px;line-height:20px;white-space:nowrap">0</div>
<div class="abs" style="left:398.5px;top:1255.3px;width:1557px;height:2px;background:#98d4f0"></div>
<div class="abs" style="left:398.5px;top:1267.1px;width:333.0px;text-align:center;color:#33607f;font-size:18px;line-height:20px;white-space:nowrap">TEST123</div>
<div class="abs" style="left:799px;top:1264.1px;width:42px;height:20px;border-radius:10px;background:#1e4a6b"><div class="abs" style="left:24px;top:2px;width:16px;height:16px;border-radius:50%;background:#fff"></div></div>
<div class="abs" style="left:911.5px;top:1267.1px;width:238.0px;text-align:center;color:#333;font-size:18px;line-height:20px;white-space:nowrap">MANUAL</div>
<div class="abs" style="left:1149.5px;top:1267.1px;width:244.5px;text-align:center;color:#333;font-size:18px;line-height:20px;white-space:nowrap">0</div>
<div class="abs" style="left:1394.0px;top:1267.1px;width:289.5px;text-align:center;color:#333;font-size:18px;line-height:20px;white-space:nowrap">1</div>
<div class="abs" style="left:1683.5px;top:1267.1px;width:272.0px;text-align:center;color:#333;font-size:18px;line-height:20px;white-space:nowrap">0</div>
<div class="abs" style="left:398.5px;top:1294.4px;width:1557px;height:2px;background:#98d4f0"></div>
<div class="abs" style="left:398.5px;top:1306.2px;width:333.0px;text-align:center;color:#33607f;font-size:18px;line-height:20px;white-space:nowrap">test_t</div>
<div class="abs" style="left:799px;top:1303.2px;width:42px;height:20px;border-radius:10px;background:#1e4a6b"><div class="abs" style="left:24px;top:2px;width:16px;height:16px;border-radius:50%;background:#fff"></div></div>
<div class="abs" style="left:911.5px;top:1306.2px;width:238.0px;text-align:center;color:#333;font-size:18px;line-height:20px;white-space:nowrap">MANUAL</div>
<div class="abs" style="left:1149.5px;top:1306.2px;width:244.5px;text-align:center;color:#333;font-size:18px;line-height:20px;white-space:nowrap">0</div>
<div class="abs" style="left:1394.0px;top:1306.2px;width:289.5px;text-align:center;color:#333;font-size:18px;line-height:20px;white-space:nowrap">1</div>
<div class="abs" style="left:1683.5px;top:1306.2px;width:272.0px;text-align:center;color:#333;font-size:18px;line-height:20px;white-space:nowrap">0</div>
<div class="abs" style="left:398.5px;top:1333.5px;width:1557px;height:2px;background:#98d4f0"></div>
<div class="abs" style="left:398.5px;top:1345.3px;width:333.0px;text-align:center;color:#33607f;font-size:18px;line-height:20px;white-space:nowrap">testcamp7</div>
<div class="abs" style="left:799px;top:1342.3px;width:42px;height:20px;border-radius:10px;background:#1e4a6b"><div class="abs" style="left:24px;top:2px;width:16px;height:16px;border-radius:50%;background:#fff"></div></div>
<div class="abs" style="left:911.5px;top:1345.3px;width:238.0px;text-align:center;color:#333;font-size:18px;line-height:20px;white-space:nowrap">MANUAL</div>
<div class="abs" style="left:1149.5px;top:1345.3px;width:244.5px;text-align:center;color:#333;font-size:18px;line-height:20px;white-space:nowrap">0</div>
<div class="abs" style="left:1394.0px;top:1345.3px;width:289.5px;text-align:center;color:#333;font-size:18px;line-height:20px;white-space:nowrap">1</div>
<div class="abs" style="left:1683.5px;top:1345.3px;width:272.0px;text-align:center;color:#333;font-size:18px;line-height:20px;white-space:nowrap">0</div>
<div class="abs" style="left:398.5px;top:1372.6px;width:1557px;height:2px;background:#98d4f0"></div>
<div class="abs" style="left:398.5px;top:1384.4px;width:333.0px;text-align:center;color:#33607f;font-size:18px;line-height:20px;white-space:nowrap">testdata122</div>
<div class="abs" style="left:799px;top:1381.4px;width:42px;height:20px;border-radius:10px;background:#1e4a6b"><div class="abs" style="left:24px;top:2px;width:16px;height:16px;border-radius:50%;background:#fff"></div></div>
<div class="abs" style="left:911.5px;top:1384.4px;width:238.0px;text-align:center;color:#333;font-size:18px;line-height:20px;white-space:nowrap">RATIO</div>
<div class="abs" style="left:1149.5px;top:1384.4px;width:244.5px;text-align:center;color:#333;font-size:18px;line-height:20px;white-space:nowrap">1.0</div>
<div class="abs" style="left:1394.0px;top:1384.4px;width:289.5px;text-align:center;color:#333;font-size:18px;line-height:20px;white-space:nowrap">1</div>
<div class="abs" style="left:1683.5px;top:1384.4px;width:272.0px;text-align:center;color:#333;font-size:18px;line-height:20px;white-space:nowrap">0</div>
<div class="abs" style="left:730.0px;top:979.5px;width:2px;height:433px;background:#98d4f0"></div>
<div class="abs" style="left:910.0px;top:979.5px;width:2px;height:433px;background:#98d4f0"></div>
<div class="abs" style="left:1148.0px;top:979.5px;width:2px;height:433px;background:#98d4f0"></div>
<div class="abs" style="left:1392.5px;top:979.5px;width:2px;height:433px;background:#98d4f0"></div>
<div class="abs" style="left:1682.0px;top:979.5px;width:2px;height:433px;background:#98d4f0"></div>
<div class="abs" style="left:1666px;top:1424px;font-size:20px;color:#999;line-height:22px">Previous</div>
<div class="abs" style="left:1776px;top:1418px;width:36px;height:36px;border-radius:50%;background:#1e4a6b;color:#fff;font-size:20px;line-height:36px;text-align:center">1</div>
<div class="abs" style="left:1839px;top:1424px;font-size:20px;color:#3a5464;line-height:22px">2</div>
<div class="abs" style="left:1891px;top:1424px;font-size:20px;color:#1e4a6b;line-height:22px">Next</div>
<div class="abs" style="left:2028px;top:891px;width:809px;text-align:center;font-size:36.3px;color:#3a474f;-webkit-text-stroke:0.9px #3a474f;letter-spacing:1.3px;line-height:36px">Inbound &amp; Outbound Sale Count</div>
<div class="abs" style="left:2028px;top:961px;width:809px;text-align:center;font-size:24.2px;color:#555;line-height:26px">Calling Status</div>
<div class="abs" style="left:2398.5px;top:1031px;width:67px;height:67px;border-radius:50%;background:#35aac5"></div>
<svg class="abs" style="left:2418px;top:1050px" width="28" height="28" viewBox="0 0 24 24"><path d="M5 3 L8.5 3 L10 7.5 L8 9 Q9.5 13 13 15.5 L15 13.5 L19.5 15 L19.5 18.5 Q19 20.5 17 20.5 Q10 20 6 15 Q3 11 3 5 Q3 3 5 3Z" fill="none" stroke="#fff" stroke-width="1.5" stroke-linejoin="round"/><path d="M14 5.5 Q18 6 18.5 10 M14 2 Q21.5 2.5 22 10" fill="none" stroke="#fff" stroke-width="1.5"/></svg>
<div class="abs" style="left:2235.0px;top:1156px;width:187.5px;height:117px;border-radius:12px;background:#e2e5e9">
<div class="abs" style="left:0;right:0;top:20px;text-align:center;font-size:21.8px;color:#3a3f44;line-height:24px;white-space:nowrap">In-bound Call</div>
<div class="abs" style="left:0;right:0;top:49.5px;text-align:center;font-size:34px;color:#3a3f44;-webkit-text-stroke:0.8px #3a3f44;line-height:36px">0</div>
</div>
<div class="abs" style="left:2432.0px;top:1156px;width:199.0px;height:117px;border-radius:12px;background:#e2e5e9">
<div class="abs" style="left:0;right:0;top:20px;text-align:center;font-size:21.8px;color:#3a3f44;line-height:24px;white-space:nowrap">Outbound Call</div>
<div class="abs" style="left:0;right:0;top:49.5px;text-align:center;font-size:34px;color:#3a3f44;-webkit-text-stroke:0.8px #3a3f44;line-height:36px">3</div>
</div>
</body></html>
